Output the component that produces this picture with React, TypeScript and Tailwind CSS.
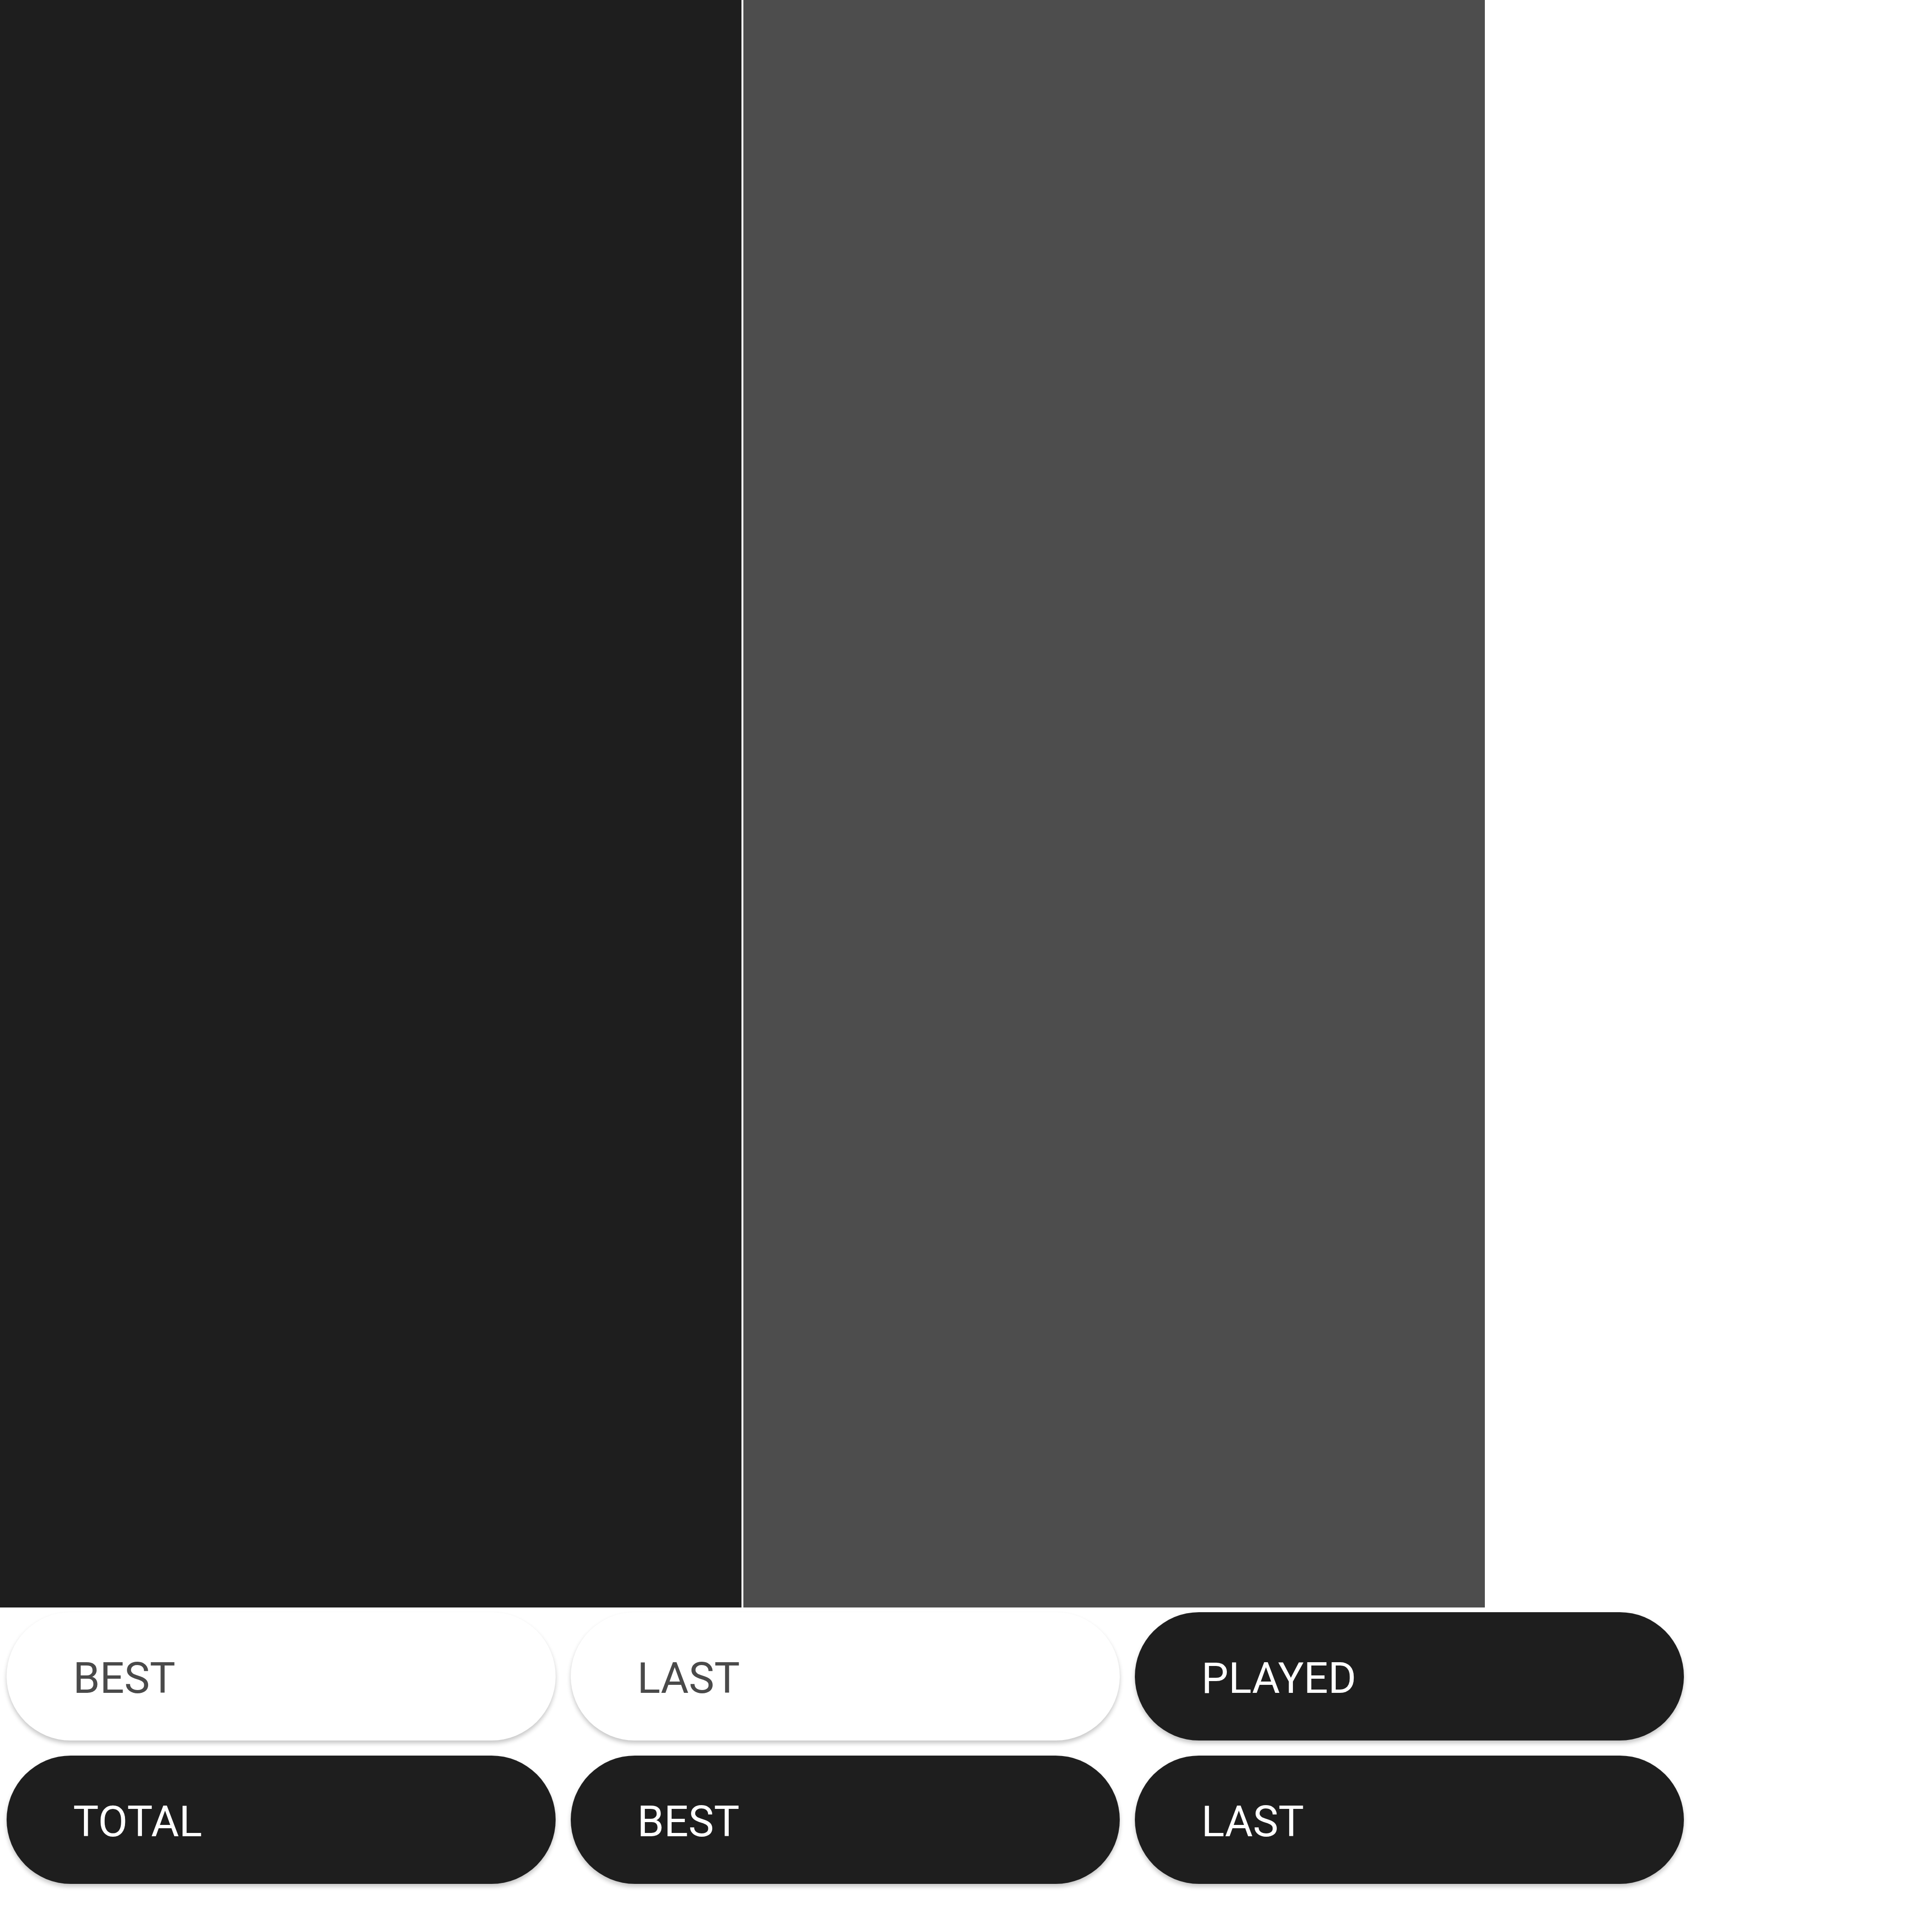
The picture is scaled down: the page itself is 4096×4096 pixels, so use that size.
import React from "react";

const Btn = ({ label, dark }: { label: string; dark?: boolean }) => (
  <button
    className={
      dark
        ? "h-[272px] w-[1164px] rounded-full bg-[#1e1e1e] text-white text-left pl-[141px] pt-[8px] text-[91px] leading-none shadow-[0_6px_10px_rgba(0,0,0,0.22)]"
        : "h-[272px] w-[1164px] rounded-full bg-white text-[#4a4a4a] text-left pl-[141px] pt-[8px] text-[91px] leading-none shadow-[0_6px_10px_rgba(0,0,0,0.22)]"
    }
    style={{ fontFamily: "Roboto, 'Noto Sans', sans-serif" }}
  >
    {label}
  </button>
);

export default function App() {
  return (
    <div className="w-[4096px] h-[4096px] bg-white">
      <div className="flex gap-[4px]">
        <div className="w-[1572px] h-[3408px] bg-[#1e1e1e]" />
        <div className="w-[1572px] h-[3408px] bg-[#4d4d4d]" />
      </div>
      <div className="grid grid-cols-[1164px_1164px_1164px] gap-x-[32px] gap-y-[32px] pl-[14px] pt-[10px]">
        <Btn label="BEST" />
        <Btn label="LAST" />
        <Btn label="PLAYED" dark />
        <Btn label="TOTAL" dark />
        <Btn label="BEST" dark />
        <Btn label="LAST" dark />
      </div>
    </div>
  );
}
